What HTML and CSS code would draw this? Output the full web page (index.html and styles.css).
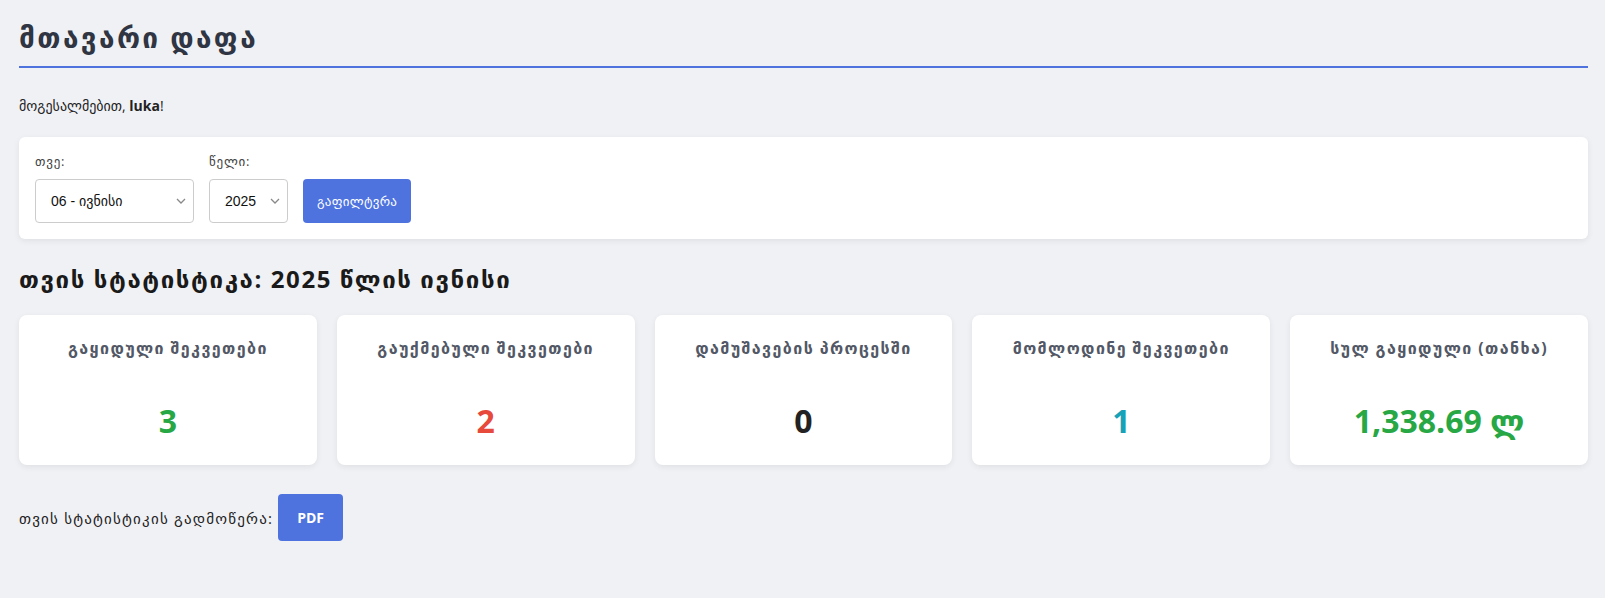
FILE: index.html
```html
<!DOCTYPE html>
<html lang="ka">
<head>
    <meta charset="UTF-8">
    <meta name="viewport" content="width=device-width, initial-scale=1.0">
    <title>მთავარი დაფა</title>
    <link rel="stylesheet" href="styles.css">
</head>
<body>
    <div class="page">
        <h1 class="page-title">მთავარი დაფა</h1>
        <p class="greeting">მოგესალმებით, <strong>luka</strong>!</p>

        <form class="filter-card">
            <div class="form-group">
                <label for="month">თვე:</label>
                <select id="month" class="month-select">
                    <option value="06">06 - ივნისი</option>
                </select>
            </div>
            <div class="form-group">
                <label for="year">წელი:</label>
                <select id="year" class="year-select">
                    <option value="2025">2025</option>
                </select>
            </div>
            <button type="button" class="button">გაფილტვრა</button>
        </form>

        <h2 class="section-title">თვის სტატისტიკა: 2025 წლის ივნისი</h2>

        <div class="stats">
            <div class="stat-card">
                <div class="stat-title">გაყიდული შეკვეთები</div>
                <div class="stat-value green">3</div>
            </div>
            <div class="stat-card">
                <div class="stat-title">გაუქმებული შეკვეთები</div>
                <div class="stat-value red">2</div>
            </div>
            <div class="stat-card">
                <div class="stat-title">დამუშავების პროცესში</div>
                <div class="stat-value dark">0</div>
            </div>
            <div class="stat-card">
                <div class="stat-title">მომლოდინე შეკვეთები</div>
                <div class="stat-value teal">1</div>
            </div>
            <div class="stat-card">
                <div class="stat-title">სულ გაყიდული (თანხა)</div>
                <div class="stat-value green">1,338.69 ლ</div>
            </div>
        </div>

        <div class="export">
            <span class="export-label">თვის სტატისტიკის გადმოწერა:</span>
            <button type="button" class="button pdf-button">PDF</button>
        </div>
    </div>
</body>
</html>
```

FILE: styles.css
```css
body {
    margin: 0;
    background-color: #f0f1f5;
    font-family: "Open Sans", "DejaVu Sans", sans-serif;
    color: #222;
}

.page {
    padding: 20px 17px 20px 19px;
}

.page-title {
    margin: 0;
    padding-bottom: 12px;
    font-size: 28px;
    line-height: 34px;
    letter-spacing: 2.4px;
    color: #2f3542;
    border-bottom: 2px solid #4e73df;
}

.greeting {
    margin: 28px 0 21px;
    font-size: 14px;
    line-height: 20px;
}

.filter-card {
    display: flex;
    align-items: flex-end;
    gap: 15px;
    background: #fff;
    padding: 16px;
    border-radius: 6px;
    box-shadow: 0 2px 6px rgba(0, 0, 0, 0.07);
}

.form-group label {
    display: block;
    margin-bottom: 10px;
    font-size: 13px;
    line-height: 16px;
    letter-spacing: 0.8px;
    color: #444;
}

.form-group select {
    -webkit-appearance: none;
    appearance: none;
    height: 44px;
    padding: 0 22px 0 15px;
    font-family: "Liberation Sans", Arial, "DejaVu Sans", sans-serif;
    font-size: 14px;
    color: #111;
    background: #fff url("data:image/svg+xml,%3Csvg xmlns='http://www.w3.org/2000/svg' width='10' height='6' viewBox='0 0 10 6'%3E%3Cpath d='M1 1l4 4 4-4' fill='none' stroke='%23888' stroke-width='1.3'/%3E%3C/svg%3E") no-repeat right 7px center;
    border: 1px solid #ccc;
    border-radius: 4px;
}

.month-select {
    width: 159px;
}

.year-select {
    width: 79px;
}

.button {
    height: 44px;
    padding: 0 14px;
    border: none;
    border-radius: 4px;
    background: #4e73df;
    color: #fff;
    font-family: inherit;
    font-size: 13px;
    letter-spacing: 0.3px;
    cursor: pointer;
}

.button:hover {
    background: #3f63c9;
}

.section-title {
    margin: 25px 0 21px;
    font-size: 24px;
    line-height: 30px;
    letter-spacing: 1.6px;
    color: #1a1a1a;
}

.stats {
    display: grid;
    grid-template-columns: repeat(5, 1fr);
    gap: 20px;
}

.stat-card {
    background: #fff;
    padding: 24px 10px;
    border-radius: 8px;
    text-align: center;
    box-shadow: 0 2px 6px rgba(0, 0, 0, 0.07);
}

.stat-title {
    font-size: 16px;
    line-height: 18px;
    letter-spacing: 1.4px;
    font-weight: bold;
    color: #525866;
}

.stat-value {
    margin-top: 44px;
    font-size: 32px;
    line-height: 40px;
    font-weight: bold;
}

.green { color: #28a745; }
.red { color: #e74a3b; }
.dark { color: #222; }
.teal { color: #17a2b8; }

.export {
    display: flex;
    align-items: center;
    gap: 5px;
    margin-top: 29px;
}

.export-label {
    font-size: 15px;
    letter-spacing: 1.2px;
}

.pdf-button {
    height: 47px;
    padding: 0 19px;
    font-size: 14px;
    font-weight: bold;
    letter-spacing: 0;
}
```
